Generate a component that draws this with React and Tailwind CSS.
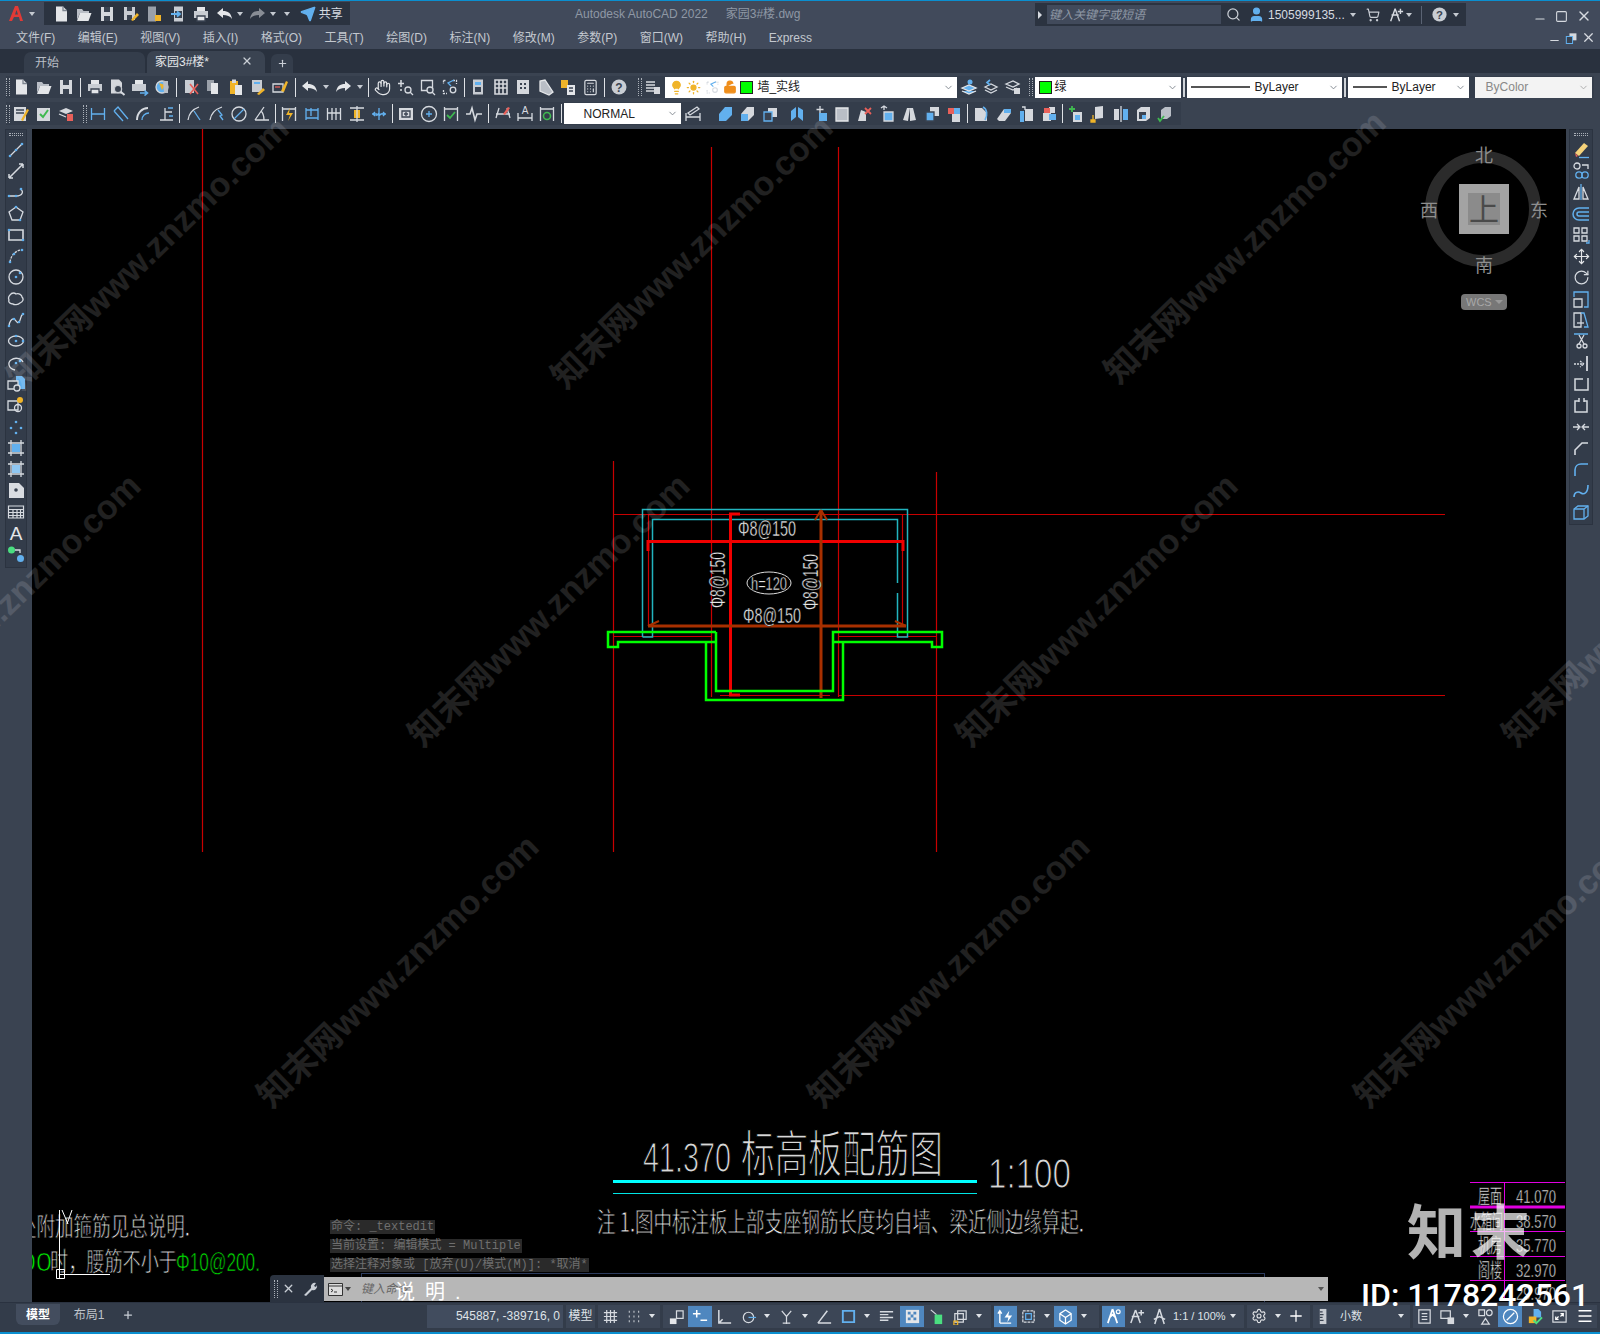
import {
  Scissors, Copy, ClipboardPaste, Hand, Calculator, Lightbulb, Sun, LockOpen, Search, User,
  ShoppingCart, Settings, Plus, Menu, Move, RotateCw, ChevronDown, X, Minus, Square, Send,
} from "lucide-react";

const C = "#d6dae0";
const B = "#62b0ee";
const Y = "#f0b429";
const R = "#e8605a";

const dot = (x, y) => <circle cx={x} cy={y} r="1.3" fill={B} stroke="none" />;
const luc = (Ic, color = C, size = 16) => <Ic size={size} color={color} strokeWidth={1.7} />;

const icons = {
  new: <><path d="M4 1.5h7l4 4v11H4z" fill="#e4e6e9" stroke="none" /><path d="M11 1.5v4h4" stroke="#7d8590" /></>,
  open: <><path d="M2 15V4h5l1.5 2H14v2H5z" fill="#b9bec6" stroke="none" /><path d="M2 16l3-8h11.5l-3 8z" fill="#e4e6e9" stroke="none" /></>,
  save: <><path d="M3 2h12v14H3z" fill="#d5d8dd" stroke="none" /><path d="M6 2h6v5H6zM6 11h6v5H6z" fill="#3a4351" stroke="none" /></>,
  saveas: <><path d="M2 2h11v13H2z" fill="#c8ccd2" stroke="none" /><path d="M5 2h5v4H5zM5 10h5v5H5z" fill="#3a4351" stroke="none" /><path d="M9 15l6-7 2 2-6 6z" fill={Y} stroke="none" /></>,
  phone: <><path d="M3 1.5h8v15H3z" fill="#9aa0a9" stroke="none" /><path d="M10 10h6v6h-6z" fill={Y} stroke="none" /></>,
  phone2: <><path d="M5 1.5h9v15H5z" fill="#c8ccd2" stroke="none" /><path d="M6 6h7v7H6z" fill="#3a4351" stroke="none" /><path d="M2 9h9M8 6.5L11 9l-3 2.5" stroke={B} strokeWidth="1.8" /></>,
  print: <><path d="M5 2h8v4H5z" fill="#e4e6e9" stroke="none" /><path d="M2 6h14v7H2z" fill="#c8ccd2" stroke="none" /><path d="M5 11h8v5H5z" fill="#e4e6e9" stroke="#3a4351" /></>,
  preview: <><path d="M3 1.5h8l3 3v11H3z" fill="#d5d8dd" stroke="none" /><circle cx="10" cy="11" r="3.6" fill="#3a4351" stroke="#c8ccd2" /><path d="M13 14l3.5 3" strokeWidth="2" /></>,
  publish: <><path d="M4 2h8v4H4z" fill="#e4e6e9" stroke="none" /><path d="M1 6h14v7H1z" fill="#c8ccd2" stroke="none" /><path d="M9 15h7M13.5 12.5l3 2.5-3 2.5" stroke={B} strokeWidth="1.6" /></>,
  globe: <><path d="M3 9a6 6 0 1 0 12 0 6 6 0 1 0-12 0" fill={B} stroke="#d5d8dd" /><path d="M6 5l6 2-3 5z" fill={Y} stroke="none" /><path d="M10 3h5v12h-4z" fill="#b9bec6" stroke="none" /></>,
  cutp: <><path d="M3 2h9v13H3z" fill="#c8ccd2" stroke="none" /><path d="M8 6l8 10M16 6L8 16" stroke={R} strokeWidth="1.6" /></>,
  copyp: <><path d="M3 2h7v11H3z" fill="#9aa0a9" stroke="none" /><path d="M7 5h7v11H7z" fill="#e4e6e9" stroke="none" /></>,
  pastep: <><path d="M3 3h8v13H3z" fill={Y} stroke="none" /><path d="M5 1.5h4V5H5z" fill="#d5d8dd" stroke="none" /><path d="M8 7h7v10H8z" fill="#e4e6e9" stroke="none" /></>,
  match: <><path d="M3 2h10v12H3z" fill="#c8ccd2" stroke="none" /><path d="M5 4h6v2H5z" fill={B} stroke="none" /><path d="M8 16l6-6 2 2-6 5z" fill={Y} stroke="none" /></>,
  brush: <><path d="M2 6h10v8H2z" stroke={C} /><path d="M4 9h5" stroke={R} /><path d="M10 13l5-10 2 1-4 10z" fill={Y} stroke="none" /></>,
  zoomr: <><path d="M5 2v7M2 5.500h6M4 12h2" strokeWidth="1.5" /><circle cx="12" cy="12" r="3" /><path d="M14 14l3 3" /></>,
  zoomw: <><path d="M2.500 2.500h11v10h-11z" /><circle cx="11" cy="12" r="3" fill="#3a4351" /><path d="M13 14l3 3" /></>,
  zoomp: <><path d="M2.500 2.500h3M12 2.500h3.500V6M2.500 2.500V6M2.500 12v3.500H6" strokeDasharray="2 1" /><path d="M13 2l-6 3 3 3" stroke={B} /><circle cx="12" cy="12" r="2.800" /></>,
  props: <><path d="M4 1.500h10v15H4z" fill="#c8ccd2" stroke="none" /><path d="M6 4h6v3H6z" fill={B} stroke="none" /><path d="M6 9h6v5H6z" fill="#3a4351" stroke="none" /></>,
  design: <path d="M3 2h12v14H3zM7 2v14M11 2v14M3 6h12M3 10h12" stroke="#d5d8dd" strokeWidth="1.600" />,
  tpal: <><path d="M3 2h12v14H3z" fill="#d5d8dd" stroke="none" /><path d="M6 5h2v2H6zM10 5h2v2h-2zM6 9h2v2H6zM10 9h2v2h-2z" fill="#3a4351" stroke="none" /></>,
  sheet: <path d="M3 13V3l5-1 8 12-4 3z" fill="#b9bec6" stroke="#e4e6e9" />,
  markup: <><path d="M2 2h7v8H2z" fill={Y} stroke="none" /><path d="M8 7h8v10H8z" fill="#e4e6e9" stroke="none" /><path d="M10 10h4M10 13h4" stroke="#3a4351" /></>,
  help: <><circle cx="9" cy="9" r="7.500" fill="#c9cdd3" stroke="none" /><text x="9" y="13.500" textAnchor="middle" fontSize="12" fontWeight="700" fill="#3a4351" stroke="none" fontFamily="Liberation Sans">?</text></>,
  laym: <><path d="M2 4h9M2 7h9M2 10h9M2 13h9" /><path d="M10 9h6v7h-6z" fill="#d5d8dd" stroke="none" /></>,
  layu: <><circle cx="10" cy="4" r="2.500" fill={B} stroke="none" /><path d="M2 10l7-3 7 3-7 3zM2 13l7 3 7-3" fill={B} stroke="#e4e6e9" /></>,
  layb: <><path d="M3 9l6-3 6 3-6 3zM3 12l6 3 6-3" /><path d="M8 2L5 4.500 8 7" stroke={B} strokeWidth="1.700" /></>,
  layl: <><path d="M2 6l7-3 6 3-6 3zM2 9l7 3 4-2" /><path d="M10 10h6v6h-6z" fill="#d5d8dd" stroke="none" /></>,
  markp: <><path d="M2 2h12v14H2z" fill="#d5d8dd" stroke="none" /><path d="M4 5h8M4 8h8" stroke="#3a4351" /><path d="M9 15l6-11 2 1-6 11z" fill={Y} stroke="none" /></>,
  markc: <><path d="M2 3h13v13H2z" fill="#d5d8dd" stroke="none" /><path d="M5 9l3 3 5-7" stroke="#3fb950" strokeWidth="2" /></>,
  laydel: <><path d="M2 6l7-3 7 3-7 3z" fill="#d5d8dd" stroke="none" /><path d="M2 9l7 3" /><path d="M10 9h6v7h-6z" fill={R} stroke="none" /></>,
  dlin: <path d="M2.500 3v12M15.500 3v12M2.500 9h13" stroke={B} />,
  dali: <path d="M2 6l4-4 10 12M2 6l9 10" stroke={B} />,
  darc: <><path d="M3 15C3 8 8 3 14 3" stroke={C} strokeWidth="2" /><path d="M8 15c0-4 3-7 7-7" stroke={B} /></>,
  dord: <><path d="M3 15h13M8 3v12M8 7h7" stroke={C} /><path d="M11 3h5M12 11h4" stroke={B} /></>,
  drad: <><path d="M3 15C4 8 8 4 14 2" stroke={C} /><path d="M15 15L9 6" stroke={B} /></>,
  djog: <><path d="M2 15C3 8 8 4 14 2" stroke={C} /><path d="M15 15l-3-4 2-1-4-5" stroke={B} /></>,
  ddia: <><circle cx="9" cy="9" r="7" stroke={C} /><path d="M4 14L14 4" stroke={B} /></>,
  dang: <path d="M2 15h14M2 15L11 2M8 6c2 2 3 5 3 9" stroke={C} />,
  dqk: <><path d="M2.500 2v14M15.500 2v14M2.500 4h13" stroke={C} /><path d="M10 3l-4 7h4l-2 6 5-8H9z" fill={Y} stroke="none" /></>,
  dbase: <path d="M3 3v12M15 3v12M8 3v8M3 5h12M3 13h12" stroke={B} />,
  dcont: <path d="M2.500 3v12M7 3v12M11 3v12M15.500 3v12M2.500 8h13" stroke={C} />,
  dspace: <><path d="M2 3h14M2 15h14" stroke={C} /><path d="M6 5h6v8H6z" fill={Y} stroke="none" /><path d="M9 1v16" stroke={C} /></>,
  dbrk: <path d="M2 9h5M11 9h5M9 3v5l-2 2 4-1-2 2v4M5 7l-2 2 2 2M13 7l2 2-2 2" stroke={B} />,
  dtol: <><path d="M2 3h14v12H2z" fill="#d5d8dd" stroke="none" /><path d="M5 6h8v6H5z" stroke="#3a4351" /><path d="M7 9h4M9 7v4" stroke="#3a4351" /></>,
  dcm: <><circle cx="9" cy="9" r="7.500" stroke={C} /><path d="M9 6v6M6 9h6" stroke={B} /></>,
  dins: <><path d="M2.500 2v14M15.500 2v14M2.500 4h13" stroke={C} /><path d="M5 10l3 3 5-6" stroke="#3fb950" strokeWidth="1.800" /></>,
  dwav: <path d="M1 9h4l2-6 3 12 2-6h5" stroke={C} strokeWidth="1.600" />,
  dedit: <><path d="M2 13L5 3M16 13L13 3M2 9h14" stroke={C} /><path d="M9 9l5-7 2 1-5 7z" fill={R} stroke="none" /></>,
  dtxt: <><path d="M2 16V8M16 16V8M2 13h14" stroke={C} /><text x="9" y="9" fontSize="10" textAnchor="middle" fill={C} stroke="none" fontFamily="Liberation Sans">A</text></>,
  dupd: <><path d="M2.500 2v14M15.500 2v14M2.500 4h13" stroke={C} /><circle cx="9" cy="11" r="3.500" stroke="#3fb950" strokeWidth="1.600" /></>,
  dsty: <path d="M2 16V8M16 16V8M2 12h14M4 8l9-6 2 2-9 6z" stroke={C} />,
  s1: <path d="M3 9l6-7h7v8l-6 6H3z" fill={B} stroke="none" />,
  s2: <><path d="M3 9l6-7h7v8l-6 6H3z" fill="#d5d8dd" stroke="none" /><path d="M3 9h7v7H3z" fill={B} stroke="none" /></>,
  s3: <><path d="M7 3h9v9H7z" fill="#d5d8dd" stroke="none" /><path d="M3 7h8v9H3z" fill="#3a4351" stroke={B} /></>,
  s4: <path d="M3 16V6l5-4v10zM10 12V2l5 3v11z" fill={B} stroke="none" />,
  s5: <><path d="M9 1v7M5.500 4.500h7" stroke={C} /><path d="M8 8h8v8H8z" fill={B} stroke="none" /></>,
  s6: <path d="M3 3h12v13H3z" fill="#b9bec6" stroke="#e4e6e9" />,
  s7: <><path d="M3 16L6 5l5 2v9z" fill="#d5d8dd" stroke="none" /><path d="M10 3l6 6M16 3l-6 6" stroke={R} strokeWidth="1.800" /></>,
  s8: <><path d="M6 7h9v9H6z" fill={B} stroke="#d5d8dd" /><path d="M6 1v4M3 3l3-2 3 2" stroke={C} /></>,
  s9: <path d="M3 15L7 3h3l-2 13zM10 3h3l3 12-6 1z" fill="#d5d8dd" stroke="none" />,
  s10: <><path d="M7 2h9v9H7z" fill="#d5d8dd" stroke="none" /><path d="M3 7h8v9H3z" fill={B} stroke="#3a4351" /></>,
  s11: <><path d="M3 3h6v6H3z" fill={R} stroke="none" /><path d="M9 3h6v6H9z" fill={B} stroke="none" /><path d="M7 9h8v8H7z" fill="#d5d8dd" stroke="none" /></>,
  s12: <><path d="M3 16V3h7l5 5v8z" fill="#d5d8dd" stroke="none" /><path d="M11 2c4 2 5 8 2 13" stroke={B} strokeWidth="1.600" /></>,
  s13: <><path d="M2 14L9 4h7v4l-6 8H4z" fill="#d5d8dd" stroke="none" /><path d="M9 4h7v4h-7z" fill={B} stroke="none" /></>,
  s14: <><path d="M3 6h4v11H3z" fill={B} stroke="none" /><path d="M8 4h8v12H8z" fill="#d5d8dd" stroke="none" /><path d="M5 2h3v3" stroke={C} /></>,
  s15: <><path d="M3 8h8v8H3zM9 2h6v6H9z" fill="#d5d8dd" stroke="none" /><path d="M4 3h6v5H4z" fill={R} stroke="none" /><path d="M9 9h7v6H9z" fill={B} stroke="none" /></>,
  s16: <><path d="M5 1v6M2 4h6" stroke="#3fb950" strokeWidth="1.800" /><path d="M6 7h9v10H6z" fill="#d5d8dd" stroke="none" /><path d="M8 10h5v5H8z" fill={B} stroke="none" /></>,
  s17: <><path d="M6 2l8-1v12l-8 1z" fill="#d5d8dd" stroke="none" /><path d="M4 10v5M2 15h4v2H2z" fill={Y} stroke={Y} /></>,
  s18: <><path d="M2 4h5v11H2z" fill="#d5d8dd" stroke="none" /><path d="M11 4h5v11h-5z" fill={B} stroke="none" /><path d="M9 1v16" /></>,
  s19: <><path d="M3 5l4-3h9v11l-4 3H3z" fill="#d5d8dd" stroke="none" /><path d="M5 7h7v7H5z" fill="#3a4351" stroke="none" /><path d="M8 10h4v4H8z" fill={B} stroke="none" /></>,
  s20: <><path d="M5 5l4-3h6v9l-4 3H5z" fill="#b9bec6" stroke="none" /><path d="M2 13l2 3 4-5" stroke="#3fb950" strokeWidth="1.800" /></>,
  line: <><path d="M3 15L15 3" />{dot(3, 15)}{dot(15, 3)}{dot(9, 9)}</>,
  xline: <path d="M2 16L16 2M2 16h4M2 16v-4M16 2h-4M16 2v4" strokeWidth="1.500" />,
  pline: <><path d="M2 13h7c7 0 8-5 4-7" />{dot(2, 13)}{dot(9, 13)}{dot(14, 6)}</>,
  polygon: <><path d="M9 2l7 5-3 8H5L2 7z" />{dot(9, 2)}{dot(13, 15)}</>,
  rect: <><path d="M2 4h14v10H2z" strokeWidth="1.600" />{dot(2, 4)}{dot(16, 14)}</>,
  arc: <><path d="M3 15C4 8 9 3 15 3" strokeDasharray="2.500 1" />{dot(3, 15)}{dot(15, 3)}{dot(7, 7)}</>,
  circle: <><circle cx="9" cy="9" r="7" />{dot(9, 9)}{dot(13, 5)}</>,
  cloud: <path d="M3 5c2-3 5-2 6-1 3-1 6 1 6 3 2 2 1 5-2 6-2 2-6 2-7 1-3 0-5-2-4-4-1-2 0-4 1-5z" />,
  spline: <><path d="M2 15c0-4 3-8 5-7s3 5 5 3 1-6 4-8" />{dot(2, 15)}{dot(7, 8)}{dot(12, 11)}{dot(16, 3)}</>,
  ellipse: <><ellipse cx="9" cy="9" rx="7.500" ry="5" />{dot(9, 9)}{dot(16, 9)}{dot(9, 4)}</>,
  earc: <><path d="M8 16C2 15 0 9 4 6s10-2 12 2" />{dot(9, 9)}{dot(13, 7)}</>,
  insert: <><path d="M9 1h6l3 3v10H9z" fill={B} stroke="none" /><path d="M1 6h10v8H1z" fill="#3a4351" /><circle cx="10" cy="13" r="3" fill="#3a4351" /></>,
  block: <><path d="M1 5h10v9H1z" /><circle cx="11" cy="12" r="3.500" /><circle cx="13" cy="4" r="3" fill={Y} stroke="none" /></>,
  point: <>{dot(9, 4)}{dot(4, 10)}{dot(14, 10)}{dot(9, 15)}</>,
  hatch: <><path d="M4 1v16M14 1v16M1 4h16M1 14h16" /><path d="M5 5h8v8H5z" fill={B} stroke="none" /></>,
  grad: <><path d="M4 1v16M14 1v16M1 4h16M1 14h16" /><path d="M5 5h8v8H5z" fill="#8fc7f2" stroke="none" /></>,
  region: <><path d="M2 2h10l5 5v10H2z" fill="#d9dce1" stroke="none" /><circle cx="9" cy="9" r="1.800" fill="#3a4351" stroke="none" /></>,
  table: <path d="M1.500 3h15v12h-15zM1.500 6.500h15M1.500 9.500h15M1.500 12.500h15M6 6.500V15M10 6.500V15M13.500 6.500V15" strokeWidth="1.200" />,
  addsel: <><circle cx="4.500" cy="5" r="3.500" fill="#4ade80" stroke="none" /><circle cx="13.500" cy="13.500" r="3.500" fill={B} stroke="none" /><path d="M8 5h5v3" /></>,
  text: <text x="9" y="16" fontSize="19" textAnchor="middle" fill="#e4e6e9" stroke="none" fontFamily="Liberation Sans">A</text>,
  erase: <><path d="M3 12l9-10 4 3-9 10z" fill="#f5d27a" stroke="none" /><path d="M3 12l3 3-2 1z" fill={R} stroke="none" /><path d="M7 16.500h10" stroke={B} /></>,
  copyo: <><circle cx="5" cy="4" r="3" /><path d="M10 3h6v4" /><circle cx="7" cy="13" r="3.200" stroke={B} /><circle cx="13" cy="13" r="3.200" stroke={B} /></>,
  mirror: <><path d="M2 16L7 4v12zM16 16L11 4v12z" /><path d="M9 1v16" stroke={B} /></>,
  offset: <path d="M17 3H7a6 6 0 0 0 0 12h10M17 7H7a2 2 0 0 0 0 4h10" stroke={B} strokeWidth="1.500" />,
  array: <><path d="M2 2h5v5H2zM10 2h5v5h-5zM2 10h5v5H2zM10 10h5v5h-5z" /><path d="M17 14v3h-3" stroke={B} /></>,
  scale: <><path d="M2 9h8v8H2z" /><path d="M2 7V2h14v15h-4" stroke={B} /></>,
  stretch: <><path d="M2 2h7v14H2z" /><path d="M9 2h3l4 14h-4" stroke={B} /><path d="M5 12h7" /></>,
  trim: <><path d="M2 2h14" stroke={B} strokeWidth="1.500" /><circle cx="7" cy="14" r="2" /><circle cx="13" cy="14" r="2" /><path d="M7 12L12 3M12 12L7 3" /></>,
  extend: <><path d="M2 10h10M8 7l4 3-4 3" strokeDasharray="2 1" /><path d="M15 2v15" strokeWidth="1.800" /></>,
  brk1: <path d="M11 4H3v11h13V3" strokeWidth="1.500" />,
  brk2: <path d="M7 2v4M12 2v4M7 5H3v11h12V5h-3" strokeWidth="1.500" />,
  join: <path d="M1 9h6M11 9h6M5 6l3 3-3 3M13 6l-3 3 3 3" stroke={C} />,
  chamfer: <path d="M3 16v-5l7-7h6" strokeWidth="1.600" />,
  fillet: <path d="M3 16V10c0-4 3-6 6-6h7" stroke={B} strokeWidth="1.600" />,
  blend: <path d="M2 16c0-5 4-6 7-4s7 0 7-8" stroke={B} strokeWidth="1.600" />,
  cube: <><path d="M2 6l4-3h10v10l-4 3H2z" stroke={B} /><path d="M2 6h10v10M12 6l4-3" stroke={B} /></>,
  grid: <path d="M5 2v14M9 2v14M13 2v14M2 5h14M2 9h14M2 13h14" strokeWidth="1.300" />,
  dots: <path d="M4 4h1M9 4h1M14 4h1M4 9h1M9 9h1M14 9h1M4 14h1M9 14h1M14 14h1" strokeWidth="2" />,
  st1: <><path d="M2 11h7v6H2z" fill="#e4e6e9" stroke="none" /><path d="M9 3h7v8H9z" /></>,
  stc: <path d="M5 2v8M1 6h8M9 13h7" stroke="#fff" strokeWidth="1.600" />,
  st3: <path d="M3 2v14h13M3 16l4-4" strokeWidth="1.600" />,
  st4: <><circle cx="9" cy="10" r="5.500" /><path d="M9 10h8" stroke={B} /></>,
  st5: <path d="M4 3l5 6 5-6M9 9v8M5 16h8" />,
  st6: <path d="M2 16L12 3M2 16h14" strokeWidth="1.600" />,
  st7: <path d="M3 3h12v12H3z" stroke={B} strokeWidth="2" />,
  st8: <path d="M2 4h14M2 7h9M2 10h14M2 13h9" strokeWidth="1.500" />,
  st9: <><path d="M2 2h14v14H2z" fill="#e4e6e9" stroke="none" /><path d="M4 4h3v3H4zM10 4h3v3h-3zM7 7h3v3H7zM4 10h3v3H4zM10 10h3v3h-3z" fill="#4f87bf" stroke="none" /></>,
  st10: <><path d="M3 2l6 5" /><path d="M7 7h8v10H7z" fill="#4ade80" stroke="none" /></>,
  st11: <><path d="M6 3h9v9H6zM3 6h9v9H3z" /><path d="M2 14h4v4H2z" stroke={Y} /></>,
  st12: <><path d="M3 16V4M1 6l2-3 2 3M3 16h12" stroke="#fff" strokeWidth="1.500" /><path d="M8 10l5-7-1 5h4l-5 7 1-5z" fill="#fff" stroke="none" /></>,
  st13: <><path d="M3 3h12v12H3z" strokeDasharray="3 1" /><path d="M6 6h6v6H6z" stroke={B} /></>,
  st14: <path d="M9 2l6 4v7l-6 4-6-4V6zM3 6l6 4 6-4M9 10v7" stroke="#fff" />,
  st15: <><path d="M8 1L3 16M8 1l5 15M5 10l3-3 3 3" stroke="#fff" strokeWidth="1.800" /><circle cx="14" cy="4" r="2" stroke="#fff" /></>,
  st16: <path d="M8 2L3 16M8 2l5 14M4 9h8M14 2v6M11 5h6" strokeWidth="1.600" />,
  st17: <path d="M9 1L4 17M9 1l5 16M3 12l6-3 6 3" strokeWidth="1.600" />,
  ruler: <><path d="M4 1h7v16H4z" fill="#c8ccd2" stroke="none" /><path d="M4 4h3M4 7h4M4 10h3M4 13h4" stroke="#3a4351" /></>,
  list: <><path d="M3 2h12v14H3z" /><path d="M6 6h6M6 9h6M6 12h6" /></>,
  lockw: <><path d="M2 3h10v8H2z" /><path d="M9 10h7v7H9z" fill="#d5d8dd" stroke="none" /></>,
  iso: <><path d="M2 2h6v6H2z" /><circle cx="13" cy="5" r="3" /><path d="M9 11l-4 6h8z" /></>,
  hw: <><circle cx="9" cy="9" r="7.500" stroke="#fff" /><path d="M5 13l8-8" stroke="#fff" /></>,
  cad: <><path d="M8 1h5l3 3v6H8z" fill={B} stroke="none" /><path d="M3 9h8v7H3z" fill={Y} stroke="none" /><path d="M8 13l3 3 6-6" stroke="#4ade80" strokeWidth="2" /></>,
  full: <><path d="M2 3h14v12H2z" /><path d="M5 12l3-3M13 6l-3 3M5 9v3h3M13 9V6h-3" stroke="#fff" /></>,
};

function Ico({ name, size = 18 }) {
  return (
    <svg width={size} height={size} viewBox="0 0 18 18" fill="none" stroke={C} strokeWidth="1.300">
      {icons[name]}
    </svg>
  );
}

function Caret({ color = "#c5cad1" }) {
  return <span className="block w-0 h-0 border-x-[3px] border-x-transparent border-t-[4px]" style={{ borderTopColor: color }} />;
}

function Cell({ name, w = "w-[22.4px]" }) {
  return (
    <div className={`${w} h-full flex items-center justify-center shrink-0`}>
      <Ico name={name} />
    </div>
  );
}

function Icons({ names, w }) {
  return names.map((n, i) => <Cell key={i} name={n} w={w} />);
}

function Sep({ w = "w-[6.500px]" }) {
  return (
    <div className={`${w} h-full flex items-center justify-center shrink-0`}>
      <div className="w-px h-[19px] bg-[#dfe2e6]" />
    </div>
  );
}

function Gripper() {
  return <div className="w-[4px] h-[18px] shrink-0 border-x border-dotted border-[#aab0b8]" />;
}

function Drop({ className, children, chevron = "#7f858d" }) {
  return (
    <div className={`relative h-[21px] bg-white flex items-center shrink-0 text-[12px] text-[#222] ${className}`}>
      {children}
      <ChevronDown size={11} color={chevron} className="absolute right-[3px] top-[5px]" />
    </div>
  );
}

function Undo({ flip }) {
  return (
    <svg width="17" height="14" viewBox="0 0 17 14" className={flip ? "-scale-x-100" : ""}>
      <path d="M1 6l6-5v3c5 0 8 2 9 8-2-3-5-4-9-4v3z" fill="#e4e6e9" />
    </svg>
  );
}

function TitleRow() {
  const menus = ["文件(F)", "编辑(E)", "视图(V)", "插入(I)", "格式(O)", "工具(T)", "绘图(D)", "标注(N)", "修改(M)", "参数(P)", "窗口(W)", "帮助(H)", "Express"];
  return (
    <div className="bg-[#414a5b] shrink-0">
      <div className="h-[25px] flex items-center relative">
        <div className="w-[44px] pl-[8px] flex items-center gap-[4px] shrink-0">
          <svg width="17" height="17" viewBox="0 0 17 17">
            <path d="M1 16L7 1h3l5 15h-3l-1-4H6l-2 4zM7 9.500h3L8.500 5z" fill="#e03a36" />
          </svg>
          <Caret />
        </div>
        <div className="w-[306px] h-[23px] bg-[#2b3340] flex items-center pl-[5px] shrink-0">
          <Icons names={["new", "open", "save", "saveas", "phone", "phone2", "print"]} w="w-[23.4px]" />
          <div className="w-[24px] flex justify-center shrink-0"><Undo /></div>
          <Caret />
          <div className="ml-[3px] w-[24px] flex justify-center shrink-0 opacity-50"><Undo flip /></div>
          <Caret />
          <div className="w-[14px] flex justify-center ml-[4px] shrink-0"><Caret /></div>
          <Send size={16} color={B} fill={B} className="ml-[6px] shrink-0" />
          <span className="ml-[3px] text-[12px] text-[#d6dae0] whitespace-nowrap">共享</span>
        </div>
        <span className="ml-[225px] text-[12px] text-[#8f98a5] whitespace-nowrap">Autodesk AutoCAD 2022</span>
        <span className="ml-[18px] text-[12px] text-[#8f98a5] whitespace-nowrap">家园3#楼.dwg</span>
        <div className="absolute left-[1035px] top-[2px] w-[431px] h-[23px] bg-[#2b3340] flex items-center">
          <span className="ml-[3px] w-0 h-0 border-y-[4px] border-y-transparent border-l-[4px] border-l-[#d6dae0]" />
          <div className="ml-[5px] w-[174px] h-[19px] bg-[#414a5b] flex items-center pl-[2px] text-[12px] italic text-[#8f98a5]">键入关键字或短语</div>
          <Search size={15} color="#c9ced5" className="ml-[5px]" />
          <User size={17} color={B} fill={B} className="ml-[7px]" />
          <span className="ml-[3px] text-[12px] text-[#d6dae0] whitespace-nowrap">1505999135...</span>
          <span className="ml-[5px]"><Caret /></span>
          <ShoppingCart size={14} color="#c9ced5" className="ml-[10px]" />
          <span className="ml-[8px]"><Ico name="st16" size={16} /></span>
          <span className="ml-[2px]"><Caret /></span>
          <div className="ml-[9px] w-px h-[18px] bg-[#5a6373]" />
          <span className="ml-[9px]"><Ico name="help" size={17} /></span>
          <span className="ml-[5px]"><Caret /></span>
        </div>
        <div className="absolute right-[8px] top-[5px] flex items-center gap-[8px]">
          <Minus size={14} color="#d6dae0" className="mt-[6px]" />
          <Square size={13} color="#d6dae0" />
          <X size={16} color="#d6dae0" />
        </div>
      </div>
      <div className="h-[23px] flex items-center gap-[22.500px] pl-[16px] relative text-[12px] text-[#c3c8cf]">
        {menus.map((m) => (
          <span key={m} className="whitespace-nowrap">{m}</span>
        ))}
        <div className="absolute right-[4px] top-[2px] flex items-center gap-[3px]">
          <Minus size={13} color="#d6dae0" className="mt-[6px]" />
          <Ico name="s3" size={14} />
          <X size={15} color="#d6dae0" />
        </div>
      </div>
    </div>
  );
}

function TabRow() {
  return (
    <div className="h-[24px] bg-[#29313e] flex items-end shrink-0 text-[12px] relative">
      <div className="ml-[24px] w-[121px] h-[21px] bg-[#343d4b] rounded-t-[7px] flex items-center pl-[11px] text-[#b9bec6]">开始</div>
      <div className="ml-[2px] w-[118px] h-[22px] bg-[#3a4351] rounded-t-[7px] flex items-center pl-[8px] text-[#e4e6e9] relative">
        家园3#楼*
        <X size={12} color="#c9ced5" className="absolute right-[12px] top-[4px]" strokeWidth={2.5} />
      </div>
      <div className="ml-[6px] w-[22px] h-[19px] bg-[#343d4b] rounded-t-[6px] flex items-center justify-center">
        <Plus size={11} color="#c9ced5" strokeWidth={2.5} />
      </div>
    </div>
  );
}

function Toolbars() {
  return (
    <div className="bg-[#3a4351] h-[56px] shrink-0 pt-[3px] pl-[6px]">
      <div className="h-[22px] flex items-center bg-[#343d4b] w-[1588px] text-[12px]">
        <Gripper />
        <Icons names={["new", "open", "save"]} />
        <Sep />
        <Icons names={["print", "preview", "publish", "globe"]} />
        <Sep />
        <Cell name="cutp" /><Cell name="copyp" /><Cell name="pastep" /><Cell name="match" /><Cell name="brush" />
        <Sep w="w-[7px]" />
        <div className="w-[22px] flex justify-center shrink-0"><Undo /></div>
        <div className="w-[11px] flex justify-center shrink-0"><Caret /></div>
        <div className="w-[23px] flex justify-center shrink-0"><Undo flip /></div>
        <div className="w-[11px] flex justify-center shrink-0"><Caret /></div>
        <Sep w="w-[6px]" />
        <div className="w-[22.400px] flex justify-center shrink-0">{luc(Hand, "#e4e6e9", 17)}</div>
        <Cell name="zoomr" /><Cell name="zoomw" /><Cell name="zoomp" />
        <Sep w="w-[6px]" />
        <Icons names={["props", "design", "tpal", "sheet", "markup"]} />
        <div className="w-[22.400px] flex justify-center shrink-0">{luc(Calculator, "#d5d8dd", 17)}</div>
        <Sep w="w-[6px]" />
        <Cell name="help" />
        <div className="w-[8px] shrink-0" />
        <Gripper />
        <Cell name="laym" />
        <Drop className="w-[292px] ml-[1px] pl-[4px]">
          <Lightbulb size={15} color={Y} fill={Y} />
          <Sun size={15} color={Y} fill={Y} className="ml-[2px]" />
          <span className="ml-[4px]"><Ico name="zoomp" size={15} /></span>
          <LockOpen size={14} color="#ef8e1b" fill="#ef8e1b" className="ml-[3px]" />
          <span className="ml-[3px] w-[13px] h-[13px] bg-[#00ff00] border border-[#222]" />
          <span className="ml-[4px]">墙_实线</span>
        </Drop>
        <Cell name="layu" /><Cell name="layb" /><Cell name="layl" />
        <div className="w-[4px] shrink-0" />
        <Gripper />
        <Drop className="w-[146px] ml-[2px] pl-[2px]">
          <span className="ml-[2px] w-[13px] h-[13px] bg-[#00ff00] border border-[#222]" />
          <span className="ml-[3px]">绿</span>
        </Drop>
        <div className="w-[6px] shrink-0 flex justify-center"><div className="w-[2px] h-[19px] bg-[#cfd3d8]" /></div>
        <Drop className="w-[155px] pl-[4px]">
          <span className="w-[59px] h-[2px] bg-[#555]" />
          <span className="ml-[5px]">ByLayer</span>
        </Drop>
        <div className="w-[6px] shrink-0 flex justify-center"><div className="w-[2px] h-[19px] bg-[#cfd3d8]" /></div>
        <Drop className="w-[121px] pl-[5px]">
          <span className="w-[34px] h-[2px] bg-[#555]" />
          <span className="ml-[5px]">ByLayer</span>
        </Drop>
        <div className="w-[6px] shrink-0" />
        <Drop className="w-[117px] pl-[11px] !text-[#888] !bg-[#f3f3f3]" chevron="#aaa">ByColor</Drop>
      </div>
      <div className="h-[23px] mt-[4px] flex items-center w-[1175px] bg-[#343d4b]">
        <Gripper />
        <Icons names={["markp", "markc", "laydel"]} />
        <div className="w-[6px] shrink-0" />
        <Gripper />
        <Icons names={["dlin", "dali", "darc", "dord"]} />
        <Sep />
        <Icons names={["drad", "djog", "ddia", "dang"]} />
        <Sep w="w-[5.500px]" />
        <Icons names={["dqk", "dbase", "dcont", "dspace", "dbrk"]} />
        <Sep w="w-[5px]" />
        <Icons names={["dtol", "dcm", "dins", "dwav"]} />
        <Sep />
        <Icons names={["dedit", "dtxt", "dupd"]} />
        <Sep w="w-[6px]" />
        <Drop className="w-[117px] pl-[19px]">NORMAL</Drop>
        <Cell name="dsty" />
        <div className="w-[10px] shrink-0" />
        <Icons names={["s1", "s2", "s3"]} />
        <div className="w-[5px] shrink-0" />
        <Icons names={["s4", "s5", "s6", "s7", "s8", "s9", "s10", "s11"]} />
        <Sep w="w-[5px]" />
        <Icons names={["s12", "s13", "s14", "s15"]} />
        <Sep w="w-[5px]" />
        <Icons names={["s16", "s17", "s18", "s19", "s20"]} />
      </div>
    </div>
  );
}

function SideBar({ names }) {
  return (
    <div className="bg-[#333c4a] border border-[#2b3340] flex flex-col items-center py-[2px]">
      <div className="w-[14px] h-[3px] border-y border-dotted border-[#aab0b8] mb-[3px] mt-[1px]" />
      {names.map((n, i) => (
        <div key={i} className="h-[21.300px] w-full flex items-center justify-center shrink-0">
          {n === "move" ? luc(Move, "#e4e6e9", 17) : n === "rotate" ? luc(RotateCw, C, 17) : <Ico name={n} />}
        </div>
      ))}
    </div>
  );
}

const T = ({ x, y, w, size, fill = "#e6e6e6", thin = 0.5, rotate, children, family = "Liberation Sans, Noto Sans CJK SC, sans-serif" }) => (
  <text
    x={x}
    y={y}
    fontSize={size}
    fill={fill}
    stroke="#000"
    strokeWidth={thin}
    fontFamily={family}
    textLength={w}
    lengthAdjust="spacingAndGlyphs"
    transform={rotate ? `rotate(${rotate} ${x} ${y})` : undefined}
  >
    {children}
  </text>
);

const CJK = "Noto Sans CJK SC, sans-serif";

function Drawing() {
  const rows = [
    ["屋面", "41.070", 1203],
    ["水箱间", "38.570", 1228],
    ["机房", "35.770", 1252],
    ["阁楼", "32.970", 1277],
    ["", "29.970", 1300],
  ];
  return (
    <svg className="absolute inset-0" width="1534" height="1173" viewBox="32 129 1534 1173" fill="none">
      {/* axis lines */}
      <g stroke="#c80000" strokeWidth="1.200">
        <path d="M202.500 129V852M613.500 461V852M711.500 147V697M838.500 147V697M936.500 472V852" />
        <path d="M613 514.500H1445M838 695.500H1445" />
        <path d="M648.500 514V626M902.500 514V626M613 636.500H711M838 636.500H936" />
        <path d="M720 695.500H830" />
      </g>
      {/* cyan boundary */}
      <path d="M642.500 637V509.500H907.500V637H897.500V593M897.500 583V519.500H652.500V637H642.500" stroke="#22b4be" strokeWidth="1.500" />
      {/* rebar */}
      <g fill="none">
        <path d="M648 551V541.500H903V551" stroke="#f00000" strokeWidth="3" />
        <path d="M740 514H730.500V695H740" stroke="#f00000" strokeWidth="3" />
        <path d="M648 626H906" stroke="#a83000" strokeWidth="3" />
        <path d="M821 510V698" stroke="#a83000" strokeWidth="3" />
        <path d="M648 626l11-5M906 626l-11-5M821 510l-6 10M821 510l6 10" stroke="#a83000" strokeWidth="2" />
      </g>
      {/* walls */}
      <path
        d="M716 632H608V647H618V642H716M716 632V691H833V632H942V647H932V642H833M706 642V700H843V642"
        stroke="#00ff00"
        strokeWidth="2.500"
      />
      <T x={738} y={536} w={58} size={22} thin={0.4}>Φ8@150</T>
      <T x={743} y={623} w={58} size={22} thin={0.4}>Φ8@150</T>
      <T x={725} y={608} w={56} size={22} rotate={-90} thin={0.4}>Φ8@150</T>
      <T x={818} y={610} w={56} size={22} rotate={-90} thin={0.4}>Φ8@150</T>
      <ellipse cx="769" cy="583" rx="22" ry="11" stroke="#ddd" />
      <T x={751} y={590} w={36} size={18} thin={0.4}>h=120</T>
      {/* titles */}
      <T x={643} y={1172} w={88} size={42} thin={1.2} fill="#d8d8d8">41.370</T>
      <T x={741} y={1172} w={202} size={50} thin={1.4} fill="#d8d8d8" family={CJK}>标高板配筋图</T>
      <path d="M613 1181.500H977" stroke="#00ffff" strokeWidth="3" />
      <path d="M613 1193.500H977" stroke="#00e5e5" />
      <T x={988} y={1188} w={83} size={42} thin={1.2} fill="#d8d8d8">1:100</T>
      <T x={597} y={1232} w={487} size={27} thin={0.8} family={CJK}>注 1.图中标注板上部支座钢筋长度均自墙、梁近侧边缘算起.</T>
      {/* clipped notes */}
      <T x={18} y={1236} w={172} size={26} thin={0.8} family={CJK}>处附加箍筋见总说明.</T>
      <T x={20} y={1271} w={32} size={26} thin={0.7} fill="#00e000">00</T>
      <T x={50} y={1271} w={127} size={26} thin={0.8} family={CJK}>时，腰筋不小于</T>
      <T x={176} y={1271} w={84} size={26} thin={0.7} fill="#00e000">Φ10@200.</T>
      {/* cursor */}
      <path d="M59.500 1210V1278M59 1274.500H110M56.500 1269.500H64.500V1278.500H56.500ZM62 1210l6 14M72 1210l-5 14" stroke="#fff" />
      {/* elevation table */}
      <g stroke="#e000e0">
        <path d="M1470 1182.500H1565M1470 1231.500H1565M1470 1256.500H1565M1470 1280.500H1565" />
        <path d="M1470 1207H1565" strokeWidth="3" />
        <path d="M1504.500 1182V1300" />
      </g>
      {rows.map(([a, b, y]) => (
        <g key={b}>
          {a && <T x={a.length === 3 ? 1470 : 1478} y={y + 1} w={a.length === 3 ? 33 : 24} size={20} thin={0.5} family={CJK}>{a}</T>}
          <T x={1516} y={y} w={40} size={19} thin={0.5}>{b}</T>
        </g>
      ))}
      {/* view cube */}
      <circle cx="1483" cy="209" r="52" stroke="#2b2b2b" strokeWidth="12" />
      <path d="M1459 184h50v50h-50z" fill="#a3a3a3" />
      <path d="M1468 193h32v32h-32z" fill="#8b8b8b" />
      <text x="1484" y="220" textAnchor="middle" fontSize="30" fill="#4a4a4a" fontFamily={CJK}>上</text>
      <g fill="#8e8e8e" fontSize="18" fontFamily={CJK} textAnchor="middle">
        <text x="1484" y="162">北</text>
        <text x="1484" y="272">南</text>
        <text x="1429" y="217">西</text>
        <text x="1539" y="217">东</text>
      </g>
      <rect x="1461" y="294" width="46" height="16" rx="4" fill="#777" />
      <text x="1466" y="306" fontSize="11" fill="#a8a8a8" fontFamily="Liberation Sans">WCS</text>
      <path d="M1495 300h8l-4 4z" fill="#999" />
    </svg>
  );
}

function Watermarks() {
  const spots = [
    [148, 253], [692, 252], [1245, 247],
    [0, 610], [549, 610], [1097, 610], [1643, 610],
    [398, 971], [949, 971], [1495, 971],
  ];
  return (
    <div className="absolute inset-0 overflow-hidden pointer-events-none">
      {spots.map(([x, y]) => (
        <span
          key={`${x}-${y}`}
          className="absolute -translate-x-1/2 -translate-y-1/2 -rotate-[44deg] whitespace-nowrap text-[34px] font-bold text-white/[0.13]"
          style={{ left: x, top: y }}
        >
          知末网www.znzmo.com
        </span>
      ))}
    </div>
  );
}

function CommandArea() {
  const lines = ["命令: _textedit", "当前设置: 编辑模式 = Multiple", "选择注释对象或 [放弃(U)/模式(M)]: *取消*"];
  return (
    <>
      <div className="absolute left-[298px] top-[1091px] flex flex-col items-start gap-[5px] font-['Liberation_Mono','Noto_Sans_CJK_SC',monospace] text-[12px] leading-[14px] text-[#6f6f6f]">
        {lines.map((l) => (
          <span key={l} className="bg-[#2a2a2a] px-[1px] whitespace-pre">{l}</span>
        ))}
      </div>
      <div className="absolute left-[329px] top-[1144px] w-[904px] h-[29px] border border-b-0 border-[#2b3a5c]" />
      <div className="absolute left-[238px] top-[1146px] w-[1058px] h-[27px] flex items-stretch">
        <div className="w-[54px] bg-[#2b3340] rounded-tl-[4px] flex items-center pl-[4px] shrink-0">
          <div className="w-[4px] h-[18px] border-x border-dotted border-[#aab0b8]" />
          <X size={13} color="#c9ced5" className="ml-[4px]" strokeWidth={2.5} />
          <svg width="16" height="16" viewBox="0 0 16 16" className="ml-[7px]">
            <path d="M2 14l7-7a4 4 0 0 1 5-5l-2 3 2 1 1-2a4 4 0 0 1-5 5l-6 6z" fill="#c9ced5" />
          </svg>
        </div>
        <div className="flex-1 h-[24px] mt-[2px] bg-[#b7b7b7] flex items-center relative text-[12px]">
          <svg width="15" height="13" viewBox="0 0 15 13" className="ml-[4px]">
            <path d="M.5.500h14v12H.500z" fill="#dcdcdc" stroke="#333" />
            <path d="M.5 3h14" stroke="#333" />
            <path d="M3 6l2 1.500L3 9M6 9h3" stroke="#333" fill="none" />
          </svg>
          <span className="ml-[2px]"><Caret color="#444" /></span>
          <span className="ml-[10px] italic text-[#666]">键入命令</span>
          <span className="absolute left-[71px] top-[3px] text-[20px] leading-[24px] text-white tracking-[10px]">说明.</span>
          <span className="absolute right-[4px] top-[10px]"><Caret color="#555" /></span>
        </div>
      </div>
    </>
  );
}

function StatusCell({ name, active, w = "w-[23px]" }) {
  return (
    <div className={`${w} h-[21px] flex items-center justify-center shrink-0 ${active ? "bg-[#4f87bf]" : ""}`}>
      <Ico name={name} size={17} />
    </div>
  );
}

function Arrow() {
  return <div className="w-[14px] h-[21px] flex items-center justify-center shrink-0"><Caret color="#dfe3e8" /></div>;
}

function StatusGroup({ children, className = "" }) {
  return <div className={`h-[23px] bg-[#3c4656] flex items-center shrink-0 ${className}`}>{children}</div>;
}

function StatusBar() {
  const wide = "w-[24px]";
  return (
    <div className="h-[30px] bg-[#333c4a] border-t border-[#2a3240] flex items-center shrink-0 text-[12px] text-[#dfe3e8] relative">
      <div className="ml-[16px] w-[44px] h-[21px] -mt-[6px] bg-[#434d5e] rounded-b-[6px] flex items-center justify-center font-bold text-white">模型</div>
      <div className="ml-[4px] w-[50px] h-[21px] -mt-[6px] flex items-center justify-center text-[#bfc4cb]">布局1</div>
      <div className="ml-[8px] -mt-[6px]"><Plus size={12} color="#c9ced5" strokeWidth={2.5} /></div>
      <div className="ml-[293px] -mt-[3px] flex items-center gap-[3px]">
        <StatusGroup className="w-[136px] bg-[#414c5e] justify-end pr-[3px]">545887, -389716, 0</StatusGroup>
        <StatusGroup className="w-[29px] justify-center">模型</StatusGroup>
        <StatusGroup className="w-[62px] pl-[1px]"><StatusCell name="grid" /><StatusCell name="dots" /><Arrow /></StatusGroup>
        <StatusGroup className="w-[328px] pl-[1px]">
          <StatusCell name="st1" w={wide} />
          <StatusCell name="stc" active w={wide} />
          <StatusCell name="st3" w={wide} />
          <StatusCell name="st4" w={wide} /><Arrow />
          <StatusCell name="st5" w={wide} /><Arrow />
          <StatusCell name="st6" w={wide} />
          <StatusCell name="st7" w={wide} /><Arrow />
          <StatusCell name="st8" w={wide} />
          <div className="w-[2px] shrink-0" />
          <StatusCell name="st9" active w={wide} />
          <StatusCell name="st10" w={wide} />
          <StatusCell name="st11" w={wide} /><Arrow />
        </StatusGroup>
        <StatusGroup className="w-[105px]">
          <StatusCell name="st12" active />
          <StatusCell name="st13" /><Arrow />
          <StatusCell name="st14" active /><Arrow />
        </StatusGroup>
        <StatusGroup className="w-[142px]">
          <StatusCell name="st15" active />
          <StatusCell name="st16" />
          <StatusCell name="st17" />
          <span className="ml-[2px] whitespace-nowrap text-[11px]">1:1 / 100%</span>
          <Arrow />
        </StatusGroup>
        <StatusGroup className="w-[63px]">
          <div className="w-[24px] flex justify-center">{luc(Settings, "#e4e6e9", 16)}</div>
          <Arrow />
          <div className="w-[22px] flex justify-center">{luc(Plus, "#fff", 18)}</div>
        </StatusGroup>
        <StatusGroup className="w-[97px]">
          <StatusCell name="ruler" />
          <span className="ml-[4px] text-[11px]">小数</span>
          <span className="ml-[32px]"><Arrow /></span>
        </StatusGroup>
        <StatusGroup>
          <StatusCell name="list" />
          <StatusCell name="lockw" /><Arrow />
          <StatusCell name="iso" w="w-[25px]" />
          <StatusCell name="hw" active w="w-[24px]" />
          <StatusCell name="cad" w="w-[25px]" />
          <StatusCell name="full" w="w-[25px]" />
          <div className="w-[25px] flex justify-center">{luc(Menu, "#fff", 18)}</div>
        </StatusGroup>
      </div>
    </div>
  );
}

const LEFT_TOOLS = ["line", "xline", "pline", "polygon", "rect", "arc", "circle", "cloud", "spline", "ellipse", "earc", "insert", "block", "point", "hatch", "grad", "region", "table", "text", "addsel"];
const RIGHT_TOOLS = ["erase", "copyo", "mirror", "offset", "array", "move", "rotate", "scale", "stretch", "trim", "extend", "brk1", "brk2", "join", "chamfer", "fillet", "blend", "cube"];

export default function App() {
  return (
    <div className="relative w-[1600px] h-[1334px] overflow-hidden flex flex-col bg-[#3a4351] font-['Liberation_Sans','Noto_Sans_CJK_SC',sans-serif]">
      <div className="h-[1px] bg-[#0a8fd0] shrink-0" />
      <TitleRow />
      <TabRow />
      <Toolbars />
      <div className="h-[1173px] flex shrink-0">
        <div className="w-[32px] px-[5px] bg-[#3a4351] shrink-0">
          <SideBar names={LEFT_TOOLS} />
        </div>
        <div className="relative w-[1534px] bg-black overflow-hidden shrink-0">
          <Drawing />
          <CommandArea />
        </div>
        <div className="w-[34px] pl-[3px] pr-[7px] bg-[#3a4351] shrink-0">
          <SideBar names={RIGHT_TOOLS} />
        </div>
      </div>
      <StatusBar />
      <div className="h-[2px] bg-[#0a8fd0] shrink-0" />
      <Watermarks />
      <span className="absolute left-[1407px] top-[1194px] text-[59px] leading-[80px] tracking-[5px] font-bold text-white/70 whitespace-nowrap">知末</span>
      <span className="absolute left-[1361px] top-[1276px] text-[32px] leading-[38px] font-medium text-white whitespace-nowrap font-['Roboto',sans-serif]">ID: 1178242561</span>
    </div>
  );
}
